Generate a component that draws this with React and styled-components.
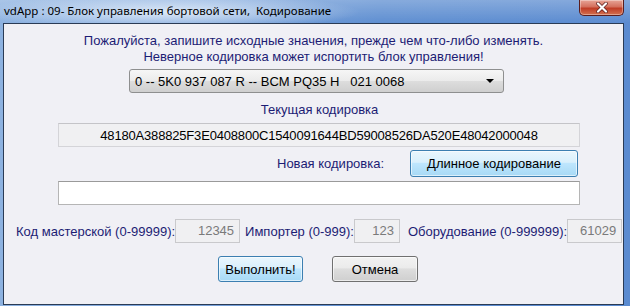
import React from "react";
import styled, { createGlobalStyle } from "styled-components";

const Global = createGlobalStyle`
  html, body { margin: 0; padding: 0; }
  body { width: 630px; height: 306px; overflow: hidden; font-family: "Liberation Sans", Arial, sans-serif; }
`;

const Window = styled.div`
  width: 630px;
  height: 306px;
  box-sizing: border-box;
  display: flex;
  flex-direction: column;
  background: linear-gradient(90deg, #8db2e0 0%, #7aa3da 30%, #5f8fd1 60%, #5b8bd0 100%);
  padding: 0 6px 1px 3px;
`;

const TitleBar = styled.div`
  height: 23px;
  display: flex;
  align-items: flex-start;
  justify-content: space-between;
  margin-left: -3px;
  margin-right: -6px;
  background:
    radial-gradient(ellipse 190px 18px at 170px 12px, rgba(235, 243, 252, 0.85), rgba(235, 243, 252, 0) 100%),
    linear-gradient(180deg, rgba(255,255,255,0.25), rgba(255,255,255,0));
`;

const Title = styled.div`
  font-family: "Noto Sans", "Open Sans", sans-serif;
  font-size: 11.5px;
  color: #000;
  padding: 3px 0 0 4px;
  line-height: 16px;
  white-space: pre;
`;

const CloseButton = styled.div`
  width: 45px;
  height: 16px;
  margin-right: 6px;
  box-sizing: border-box;
  border: 1px solid #5a1d1d;
  border-top: none;
  border-radius: 0 0 5px 5px;
  background: linear-gradient(180deg, #e7a597 0%, #d4705d 45%, #c03d26 55%, #d2704f 100%);
  display: flex;
  align-items: center;
  justify-content: center;
  box-shadow: inset 0 0 0 1px rgba(255,255,255,0.35);
`;

const Client = styled.div`
  flex: 1;
  box-sizing: border-box;
  border: 1px solid #2a3b55;
  background: #f0f0f5;
  display: flex;
  flex-direction: column;
  align-items: stretch;
  color: #1c1c74;
  font-size: 13px;
  padding: 9px 0 0 0;
`;

const Notice = styled.div`
  text-align: center;
  line-height: 16px;
  height: 16px;
`;

const Center = styled.div`
  display: flex;
  justify-content: center;
  padding-left: ${p => p.$shift || 0}px;
  margin-top: ${p => p.$top || 0}px;
`;

const Select = styled.div`
  width: 375px;
  height: 24px;
  box-sizing: border-box;
  border: 1px solid #8e8f8f;
  border-radius: 3px;
  background: linear-gradient(180deg, #f6f6f6 0%, #ebebeb 50%, #dddddd 51%, #cfcfcf 100%);
  display: flex;
  align-items: center;
  justify-content: space-between;
  padding: 0 9px 0 5px;
  color: #000;
  white-space: pre;
`;

const Arrow = styled.div`
  width: 0;
  height: 0;
  border-left: 4px solid transparent;
  border-right: 4px solid transparent;
  border-top: 4px solid #000;
`;

const Caption = styled.div`
  text-align: center;
  line-height: 16px;
  margin-top: ${p => p.$top || 0}px;
  padding-left: ${p => p.$shift || 0}px;
`;

const Field = styled.div`
  margin: ${p => p.$top || 0}px 0 0 54px;
  width: 522px;
  height: 24px;
  box-sizing: border-box;
  border: 1px solid ${p => (p.$white ? "#b5b5b5" : "#d4d4d8")};
  border-top-color: ${p => (p.$white ? "#9a9a9a" : "#c4c4c8")};
  background: ${p => (p.$white ? "#ffffff" : "#f0f0f2")};
  display: flex;
  align-items: center;
  justify-content: center;
  color: #000;
  letter-spacing: -0.18px;
`;

const NewRow = styled.div`
  display: flex;
  align-items: center;
  margin-top: 3px;
  height: 27px;
`;

const NewLabel = styled.div`
  margin-left: 273px;
  width: 133px;
`;

const Button = styled.div`
  width: ${p => p.$w}px;
  height: ${p => p.$h || 26}px;
  box-sizing: border-box;
  border-radius: 3px;
  border: 1px solid ${p => (p.$blue ? "#3c7fb1" : "#707070")};
  background: ${p =>
    p.$blue
      ? "linear-gradient(180deg, #eaf6fd 0%, #d9f0fc 45%, #bee6fd 50%, #a7d9f5 100%)"
      : "linear-gradient(180deg, #f2f2f2 0%, #ebebeb 45%, #dddddd 50%, #cfcfcf 100%)"};
  box-shadow: inset 0 0 0 1px rgba(255,255,255,0.6);
  display: flex;
  align-items: center;
  justify-content: center;
  color: #000;
`;

const ParamRow = styled.div`
  display: flex;
  align-items: center;
  margin-top: 14px;
  padding-left: 12px;
  height: 24px;
  white-space: pre;
`;

const ParamLabel = styled.span`
  margin-left: ${p => p.$gap || 0}px;
`;

const NumBox = styled.div`
  width: ${p => p.$w}px;
  height: 24px;
  box-sizing: border-box;
  border: 1px solid #c9c9cc;
  background: #f0f0f2;
  color: #7a7a7a;
  text-align: right;
  padding-right: 5px;
  line-height: 22px;
  flex-shrink: 0;
`;

const Actions = styled.div`
  display: flex;
  margin-top: 13px;
  padding-left: 214px;
  gap: 29px;
`;

export default function App() {
  return (
    <>
      <Global />
      <Window>
        <TitleBar>
          <Title>{"vdApp : 09- Блок управления бортовой сети,  Кодирование"}</Title>
          <CloseButton>
            <svg width="14" height="11" viewBox="0 0 14 11">
              <path d="M3 1.5 L11 9.5 M11 1.5 L3 9.5" stroke="#5a1d1d" strokeWidth="3.6" strokeLinecap="round" />
              <path d="M3 1.5 L11 9.5 M11 1.5 L3 9.5" stroke="#ffffff" strokeWidth="2.2" strokeLinecap="round" />
            </svg>
          </CloseButton>
        </TitleBar>
        <Client>
          <Notice>Пожалуйста, запишите исходные значения, прежде чем что-либо изменять.</Notice>
          <Notice>Неверное кодировка может испортить блок управления!</Notice>
          <Center $top={4} $shift={6}>
            <Select>
              <span>{"0 -- 5K0 937 087 R -- BCM PQ35 H   021 0068"}</span>
              <Arrow />
            </Select>
          </Center>
          <Caption $top={9} $shift={12}>Текущая кодировка</Caption>
          <Field $top={5}>48180A388825F3E0408800C1540091644BD59008526DA520E48042000048</Field>
          <NewRow>
            <NewLabel>Новая кодировка:</NewLabel>
            <Button $blue $w={168} $h={27}>Длинное кодирование</Button>
          </NewRow>
          <Field $white $top={4}></Field>
          <ParamRow>
            <ParamLabel>Код мастерской (0-99999):</ParamLabel>
            <NumBox $w={65}>12345</NumBox>
            <ParamLabel $gap={5}>Импортер (0-999):</ParamLabel>
            <NumBox $w={46}>123</NumBox>
            <ParamLabel $gap={8}>Оборудование (0-999999):</ParamLabel>
            <NumBox $w={55}>61029</NumBox>
          </ParamRow>
          <Actions>
            <Button $blue $w={85}>Выполнить!</Button>
            <Button $w={86}>Отмена</Button>
          </Actions>
        </Client>
      </Window>
    </>
  );
}
